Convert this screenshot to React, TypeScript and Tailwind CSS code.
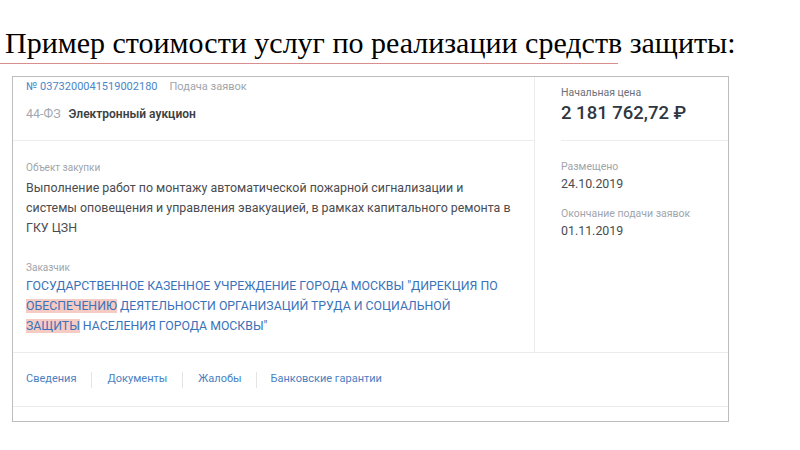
export default function App() {
  return (
    <div className="w-[800px] h-[450px] bg-white overflow-hidden font-['Roboto',sans-serif]">
      <div className="w-[618px] border-b border-[#d98e8e] pt-[26px] pb-[4px]">
        <h1 className="pl-[5px] font-['Liberation_Serif',serif] text-[30px] leading-[33px] text-black whitespace-nowrap">
          Пример стоимости услуг по реализации средств защиты:
        </h1>
      </div>

      <div className="ml-[12px] mt-[12px] w-[717px] h-[346px] border border-[#bdbdbd] flex flex-col">
        <div className="flex h-[276px] border-b border-[#ececec]">
          {/* левая колонка */}
          <div className="w-[522px] border-r border-[#ececec] flex flex-col">
            <div className="h-[64px] border-b border-[#ececec] pl-[13px] pt-[2px]">
              <div className="flex items-center text-[11px] leading-[16px]">
                <span className="text-[#4a86c8]">№ 0373200041519002180</span>
                <span className="ml-[12px] text-[#a0a5ab]">Подача заявок</span>
              </div>
              <div className="mt-[10px] flex items-center text-[12px] leading-[18px]">
                <span className="text-[12.5px] text-[#a3a8ae]">44-ФЗ</span>
                <span className="ml-[8px] font-semibold text-[#3d3f42]">Электронный аукцион</span>
              </div>
            </div>
            <div className="pl-[13px] pr-[8px]">
              <div className="mt-[20px] text-[10px] leading-[14px] text-[#a0a5ab]">Объект закупки</div>
              <p className="mt-[3px] text-[12.4px] leading-[20px] text-[#4a4c50]">
                Выполнение работ по монтажу автоматической пожарной сигнализации и<br />
                системы оповещения и управления эвакуацией, в рамках капитального ремонта в<br />
                ГКУ ЦЗН
              </p>
              <div className="mt-[23px] text-[10px] leading-[14px] text-[#a0a5ab]">Заказчик</div>
              <p className="mt-[1px] text-[12.3px] leading-[20px] text-[#3a72b9]">
                ГОСУДАРСТВЕННОЕ КАЗЕННОЕ УЧРЕЖДЕНИЕ ГОРОДА МОСКВЫ "ДИРЕКЦИЯ ПО<br />
                <span className="bg-[#f5cbc3]">ОБЕСПЕЧЕНИЮ</span> ДЕЯТЕЛЬНОСТИ ОРГАНИЗАЦИЙ ТРУДА И СОЦИАЛЬНОЙ<br />
                <span className="bg-[#f5cbc3]">ЗАЩИТЫ</span> НАСЕЛЕНИЯ ГОРОДА МОСКВЫ"
              </p>
            </div>
          </div>

          {/* правая колонка */}
          <div className="flex-1 pl-[26px] flex flex-col">
            <div className="h-[64px] border-b border-[#ececec] pt-[9px]">
              <div className="text-[10.5px] leading-[14px] text-[#6b7077]">Начальная цена</div>
              <div className="mt-[1px] text-[18.5px] leading-[24px] font-medium text-[#2e3640]">2 181 762,72 ₽</div>
            </div>
            <div className="mt-[19px] text-[10.5px] leading-[14px] text-[#a0a5ab]">Размещено</div>
            <div className="mt-[1px] text-[12.4px] leading-[18px] text-[#4a4c50]">24.10.2019</div>
            <div className="mt-[14px] text-[10.5px] leading-[14px] text-[#a0a5ab]">Окончание подачи заявок</div>
            <div className="mt-[1px] text-[12.4px] leading-[18px] text-[#4a4c50]">01.11.2019</div>
          </div>
        </div>

        <div className="h-[54px] border-b border-[#ececec] flex items-center pl-[13px] text-[11px] text-[#4a7fc1]">
          <span>Сведения</span>
          <span className="mx-[15px] h-[16px] border-l border-[#e4e4e4]"></span>
          <span>Документы</span>
          <span className="mx-[15px] h-[16px] border-l border-[#e4e4e4]"></span>
          <span>Жалобы</span>
          <span className="mx-[14px] h-[16px] border-l border-[#e4e4e4]"></span>
          <span>Банковские гарантии</span>
        </div>
      </div>
    </div>
  );
}
